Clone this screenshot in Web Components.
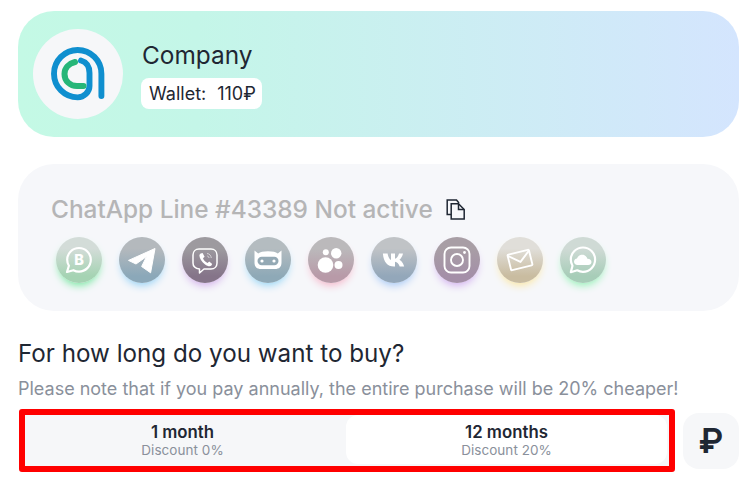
<!DOCTYPE html>
<html>
<head>
<meta charset="utf-8">
<style>
  html, body { margin: 0; background: #fff; }
  body { font-family: Inter, "Noto Sans", sans-serif; color: #1f2733; }
  main { display: block; padding: 11px 8px 0 18px; }
</style>
</head>
<body>
<main>
  <profile-card name="Company" balance="110₽"></profile-card>
  <line-card heading="ChatApp Line #43389 Not active">
    <channel-icon kind="wab" top="#d3dcd8" bottom="#a5d3b3" glow="#6ee69a"></channel-icon>
    <channel-icon kind="telegram" top="#b4b9bd" bottom="#8ba8b9" glow="#8fcff5"></channel-icon>
    <channel-icon kind="viber" top="#9d9a9f" bottom="#857489" glow="#cfa8e8"></channel-icon>
    <channel-icon kind="bot" top="#b4bcc0" bottom="#8ea9b7" glow="#8fd3f5"></channel-icon>
    <channel-icon kind="bubbles" top="#bbb9bb" bottom="#b89aa8" glow="#f5b0c5"></channel-icon>
    <channel-icon kind="vk" top="#c0c3c6" bottom="#93a7ba" glow="#9fc4f5"></channel-icon>
    <channel-icon kind="instagram" top="#a89ea5" bottom="#a48fa8" glow="#cfa8ee"></channel-icon>
    <channel-icon kind="mail" top="#e0ded9" bottom="#c9bca0" glow="#fbe59b"></channel-icon>
    <channel-icon kind="cloud" top="#cfdad5" bottom="#a7cdb8" glow="#8cf0b0"></channel-icon>
  </line-card>
  <period-section></period-section>
</main>

<script>
const profileCardTemplate = document.createElement('template');
profileCardTemplate.innerHTML = `
  <style>
    :host { display: flex; align-items: center; gap: 19px; box-sizing: border-box; height: 126px; padding-left: 15px; border-radius: 36px; background: linear-gradient(90deg, #c4f9e5 0%, #c4f6e8 25%, #d4e5fe 100%); }
    .avatar { width: 90px; height: 90px; border-radius: 50%; background: #f6f7f9; display: flex; align-items: center; justify-content: center; }
    .info { display: flex; flex-direction: column; align-items: flex-start; margin-top: 1px; }
    .name { font-size: 24.4px; line-height: 30px; color: #1f2733; }
    .wallet { margin: 8px 0 0 -1px; height: 31px; padding: 0 6px 0 8px; display: flex; align-items: center; gap: 11px; background: #fff; border-radius: 8px; font-size: 18px; }
  </style>
  <div class="avatar">
    <svg width="60" height="60" viewBox="48 44 60 60" fill="none" stroke-linecap="round">
      <path d="M101.4 96V73.7A23.7 23.7 0 1 0 77.7 97.4C84 97.4 89.5 92 89.5 86V73C89.5 66 86 62 81 60.5" stroke="#0f8fcf" stroke-width="5.9"/>
      <path d="M75 62C69 63.5 64.5 68 64.5 74C64.5 81 70 86 77 86H83.5" stroke="#26b678" stroke-width="6"/>
    </svg>
  </div>
  <div class="info">
    <div class="name"></div>
    <div class="wallet"><span>Wallet:</span><span class="sum"></span></div>
  </div>
`;

class ProfileCard extends HTMLElement {
  constructor() {
    super();
    this.attachShadow({ mode: 'open' });
    this.shadowRoot.appendChild(profileCardTemplate.content.cloneNode(true));
  }
  connectedCallback() {
    this.shadowRoot.querySelector('.name').textContent = this.getAttribute('name');
    this.shadowRoot.querySelector('.sum').textContent = this.getAttribute('balance');
  }
}
customElements.define('profile-card', ProfileCard);

const lineCardTemplate = document.createElement('template');
lineCardTemplate.innerHTML = `
  <style>
    :host { display: block; box-sizing: border-box; height: 147px; margin-top: 27px; padding: 28px 33px 0 33px; border-radius: 36px; background: #f6f7fa; }
    .head { display: flex; align-items: center; gap: 13px; height: 34px; }
    .title { font-size: 24.4px; font-weight: 500; color: #b5b5b6; line-height: 34px; }
    .icons { display: flex; gap: 17px; margin: 11px 0 0 5px; }
  </style>
  <div class="head">
    <span class="title"></span>
    <svg width="20" height="21" viewBox="0 0 20 21" fill="none" stroke="#1f2733" stroke-width="1.5">
      <path d="M5 15.5H1.2V1H10.5L13 4"/>
      <path d="M5.2 4.8H12.5L18.2 10.5V20H5.2Z" fill="#f6f7fa"/>
      <path d="M12.5 4.8V10.5H18.2"/>
    </svg>
  </div>
  <div class="icons"><slot></slot></div>
`;

class LineCard extends HTMLElement {
  constructor() {
    super();
    this.attachShadow({ mode: 'open' });
    this.shadowRoot.appendChild(lineCardTemplate.content.cloneNode(true));
  }
  connectedCallback() {
    this.shadowRoot.querySelector('.title').textContent = this.getAttribute('heading');
  }
}
customElements.define('line-card', LineCard);

// белые пиктограммы каналов, viewBox 46x46
const channelGlyphs = {
  wab: `<path d="M23 11C16.4 11 11.2 16.2 11.2 22.7C11.2 24.9 11.8 27 12.9 28.8L11 35L17.4 33.2C19.1 34.1 21 34.6 23 34.6C29.5 34.6 34.8 29.3 34.8 22.8C34.8 16.2 29.5 11 23 11Z" fill="none" stroke="#fff" stroke-width="2.2" stroke-linejoin="round"/>
        <text x="23" y="28.2" text-anchor="middle" font-family="Inter, sans-serif" font-size="14.5" font-weight="800" fill="#fff">B</text>`,
  telegram: `<path d="M9.5 23.4L36 11.5L31.6 35.8L22.6 29.5L27.6 19.5L17 27Z" fill="#fff" stroke="#fff" stroke-width="1" stroke-linejoin="round"/>`,
  viber: `<path d="M17 12H29C32.5 12 35 14.5 35 18V26C35 29.5 32.5 32 29 32H22L17.5 36V32C13.5 31.5 11 29.5 11 26V18C11 14.5 13.5 12 17 12Z" fill="none" stroke="#fff" stroke-width="1.5" stroke-linejoin="round"/>
        <path d="M18.6 16.5L20.6 16.1L22.6 19.7L21 21.3C21.8 23.4 23.2 25 25.6 26L27.2 24.5L30.2 26.9L29.4 28.6C28 29.8 25.6 29.3 22.8 27.2C19.6 24.8 17.6 21.4 17.4 18.8C17.4 17.7 17.8 17 18.6 16.5Z" fill="#fff"/>
        <path d="M25 16.5C27.5 16.8 29 18.5 29.3 21M25.2 19C26.3 19.2 26.9 19.9 27 21" fill="none" stroke="#fff" stroke-width=".9" opacity=".65"/>`,
  bot: `<path d="M9.5 13.5L13.2 16.4C15.4 14.9 18 14.2 23 14.2C28 14.2 30.6 14.9 32.8 16.4L36.5 13.5V25.5C36.5 30 34 32 30 32H16C12 32 9.5 30 9.5 25.5Z" fill="#fff"/>
        <rect x="12.5" y="19.8" width="21" height="8.4" rx="4.2" fill="#94a9b4"/>
        <circle cx="17" cy="24" r="1.6" fill="#fff"/><circle cx="29" cy="24" r="1.6" fill="#fff"/>`,
  bubbles: `<circle cx="17.5" cy="28" r="7.8" fill="#fff"/><circle cx="28.2" cy="16.2" r="5.2" fill="#fff"/><circle cx="17.8" cy="15.2" r="3" fill="#fff"/><circle cx="30.5" cy="28" r="4" fill="#fff"/>`,
  vk: `<path d="M10.5 16.5H15.2C15.6 19.6 17 22.4 18.6 23V16.5H22.6V21.8C24.2 21.6 25.9 19.2 26.6 16.5H30.6C30 19.6 28.3 21.8 27 22.8C28.3 23.4 30.6 25.2 31.8 29.5H27.3C26.5 27 24.8 25 22.6 24.7V29.5H21.6C15 29.5 11 24.7 10.5 16.5Z" fill="#fff" transform="translate(1.4 0)"/>`,
  instagram: `<rect x="10.5" y="10.5" width="25" height="25" rx="6.5" fill="none" stroke="#fff" stroke-width="1.9"/>
        <circle cx="23" cy="23" r="6" fill="none" stroke="#fff" stroke-width="1.9"/><circle cx="30.5" cy="15.5" r="1.4" fill="#fff"/>`,
  mail: `<g transform="rotate(-14 23 23)" fill="none" stroke="#fff" stroke-width="1.9" stroke-linejoin="round"><rect x="12" y="15" width="22" height="16" rx="1"/><path d="M12 16L23 25L34 16"/></g>`,
  cloud: `<path d="M23 10.5C16.3 10.5 10.8 15.9 10.8 22.6C10.8 24.9 11.4 27 12.5 28.8L10.8 35.2L17.2 33.3C19 34.3 20.9 34.8 23 34.8C29.7 34.8 35.1 29.3 35.1 22.6C35.1 15.9 29.7 10.5 23 10.5Z" fill="none" stroke="#fff" stroke-width="2.2" stroke-linejoin="round"/>
        <path d="M17.5 28C15.4 28 14 26.5 14 24.7C14 22.9 15.3 21.6 17 21.5C17.7 19.2 19.8 17.7 22.2 17.7C24.8 17.7 26.9 19.4 27.4 21.7C29.9 21.6 31.5 23.1 31.5 24.9C31.5 26.7 30.1 28 28.2 28Z" fill="#fff"/>`
};

class ChannelIcon extends HTMLElement {
  constructor() {
    super();
    this.attachShadow({ mode: 'open' });
  }
  connectedCallback() {
    const glyph = channelGlyphs[this.getAttribute('kind')];
    this.shadowRoot.innerHTML = `
      <style>
        :host { display: block; width: 46px; height: 46px; border-radius: 50%; background: linear-gradient(180deg, ${this.getAttribute('top')} 25%, ${this.getAttribute('bottom')} 85%); box-shadow: 0 5px 8px -3px ${this.getAttribute('glow')}; }
        svg { display: block; }
      </style>
      <svg width="46" height="46" viewBox="0 0 46 46">${glyph}</svg>
    `;
  }
}
customElements.define('channel-icon', ChannelIcon);

const periodOptionTemplate = document.createElement('template');
periodOptionTemplate.innerHTML = `
  <style>
    :host { display: flex; flex-direction: column; align-items: center; justify-content: center; border-radius: 12px; box-sizing: border-box; }
    :host([selected]) { background: #fff; margin: 0 2px 2px 0; padding-top: 2px; }
    :host(:not([selected])) { padding-right: 6px; }
    .label { font-size: 16.8px; font-weight: 600; line-height: 19px; color: #1f2733; }
    .note { font-size: 13.5px; line-height: 15px; margin-top: 1px; color: #8a909b; letter-spacing: .05px; }
  </style>
  <div class="label"><slot></slot></div>
  <div class="note"></div>
`;

class PeriodOption extends HTMLElement {
  constructor() {
    super();
    this.attachShadow({ mode: 'open' });
    this.shadowRoot.appendChild(periodOptionTemplate.content.cloneNode(true));
  }
  connectedCallback() {
    this.shadowRoot.querySelector('.note').textContent = this.getAttribute('note');
  }
}
customElements.define('period-option', PeriodOption);

const periodSectionTemplate = document.createElement('template');
periodSectionTemplate.innerHTML = `
  <style>
    :host { display: block; margin-top: 27px; }
    h2 { margin: 0; font-size: 24.2px; font-weight: 400; line-height: 32px; color: #1f2733; }
    p { margin: 7px 0 0; font-size: 18px; line-height: 24px; color: #8a909b; }
    .row { display: flex; align-items: center; margin-top: 8px; margin-left: 1px; gap: 8px; }
    .tabs { flex: 1; box-sizing: border-box; height: 63px; display: grid; grid-template-columns: 321px 1fr; border: 6px solid #f00; border-radius: 3px; background: #f6f7f9; }
    .currency { width: 56px; height: 56px; border-radius: 16px; background: #f6f7f9; display: flex; align-items: center; justify-content: center; font-size: 34px; font-weight: 600; color: #1f2733; }
  </style>
  <h2>For how long do you want to buy?</h2>
  <p>Please note that if you pay annually, the entire purchase will be 20% cheaper!</p>
  <div class="row">
    <div class="tabs">
      <period-option note="Discount 0%">1 month</period-option>
      <period-option note="Discount 20%" selected>12 months</period-option>
    </div>
    <div class="currency">₽</div>
  </div>
`;

class PeriodSection extends HTMLElement {
  constructor() {
    super();
    this.attachShadow({ mode: 'open' });
    this.shadowRoot.appendChild(periodSectionTemplate.content.cloneNode(true));
  }
}
customElements.define('period-section', PeriodSection);
</script>
</body>
</html>
